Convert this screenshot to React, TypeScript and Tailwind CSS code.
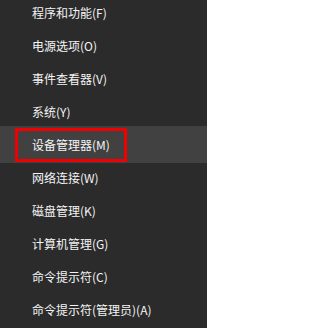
import React from 'react';

interface MenuItem {
  label: string;
  active?: boolean;
}

const items: MenuItem[] = [
  { label: '程序和功能(F)' },
  { label: '电源选项(O)' },
  { label: '事件查看器(V)' },
  { label: '系统(Y)' },
  { label: '设备管理器(M)', active: true },
  { label: '网络连接(W)' },
  { label: '磁盘管理(K)' },
  { label: '计算机管理(G)' },
  { label: '命令提示符(C)' },
  { label: '命令提示符(管理员)(A)' },
];

const App: React.FC = () => {
  return (
    <div
      className="w-[207px] h-[328px] overflow-hidden bg-[#2b2b2b] text-[#f4f4f4] text-[12px]"
      style={{ fontFamily: '"Noto Sans CJK SC", "Noto Sans", sans-serif' }}
    >
      <div className="-mt-[4px] flex flex-col">
        {items.map((item) =>
          item.active ? (
            <div
              key={item.label}
              className="relative -my-[2px] h-[37px] bg-[#414141] flex items-center pl-[32px]"
            >
              <span className="leading-none">{item.label}</span>
              {/* red highlight frame */}
              <div className="absolute left-[15px] top-[2px] w-[112px] h-[34px] border-[3px] border-[#f00000]" />
            </div>
          ) : (
            <div key={item.label} className="h-[33px] flex items-center pl-[32px]">
              <span className="leading-none">{item.label}</span>
            </div>
          )
        )}
      </div>
    </div>
  );
};

export default App;
